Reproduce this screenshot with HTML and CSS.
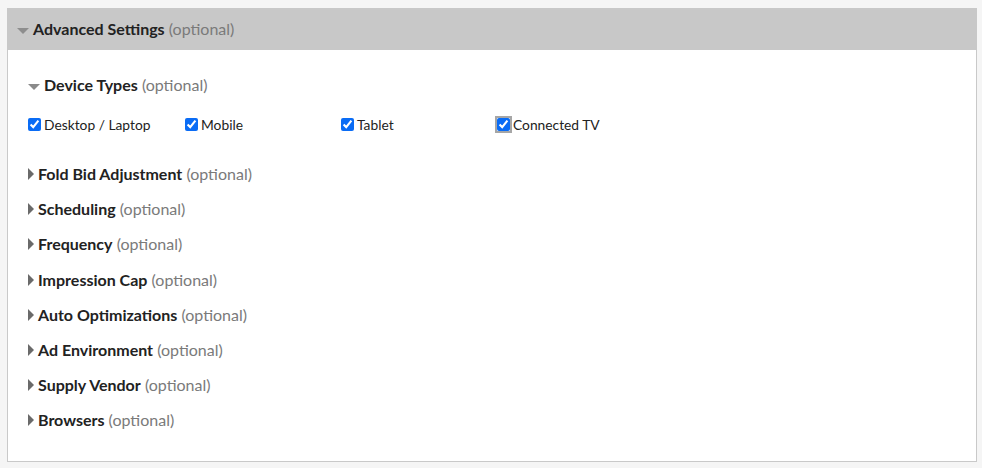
FILE: index.html
```html
<!DOCTYPE html>
<html lang="en-US">
<head>
   <meta charset="UTF-8">
   <meta name="viewport" content="width=device-width, initial-scale=1.0">
   <title>Advanced Settings</title>
   <link rel="stylesheet" href="styles.css">
</head>
<body>
   <div class="panel">
      <div class="panel-header">
         <span class="caret-down light"></span>
         <span class="title"><strong>Advanced Settings</strong> <span class="optional">(optional)</span></span>
      </div>
      <div class="panel-body">
         <div class="section-title">
            <span class="caret-down"></span>
            <span class="title"><strong>Device Types</strong> <span class="optional">(optional)</span></span>
         </div>
         <div class="device-list">
            <label><input type="checkbox" checked>Desktop / Laptop</label>
            <label><input type="checkbox" checked>Mobile</label>
            <label><input type="checkbox" checked>Tablet</label>
            <label><input type="checkbox" class="focused" checked>Connected TV</label>
         </div>

         <div class="collapsed-list">
            <div class="row"><span class="caret-right"></span><span class="title"><strong>Fold Bid Adjustment</strong> <span class="optional">(optional)</span></span></div>
            <div class="row"><span class="caret-right"></span><span class="title"><strong>Scheduling</strong> <span class="optional">(optional)</span></span></div>
            <div class="row"><span class="caret-right"></span><span class="title"><strong>Frequency</strong> <span class="optional">(optional)</span></span></div>
            <div class="row"><span class="caret-right"></span><span class="title"><strong>Impression Cap</strong> <span class="optional">(optional)</span></span></div>
            <div class="row"><span class="caret-right"></span><span class="title"><strong>Auto Optimizations</strong> <span class="optional">(optional)</span></span></div>
            <div class="row"><span class="caret-right"></span><span class="title"><strong>Ad Environment</strong> <span class="optional">(optional)</span></span></div>
            <div class="row"><span class="caret-right"></span><span class="title"><strong>Supply Vendor</strong> <span class="optional">(optional)</span></span></div>
            <div class="row"><span class="caret-right"></span><span class="title"><strong>Browsers</strong> <span class="optional">(optional)</span></span></div>
         </div>
      </div>
   </div>
</body>
</html>
```

FILE: styles.css
```css
:root {
   --page-bg: #f5f5f5;
   --header-bg: #c8c8c8;
   --border: #c9c9c9;
   --text: #222;
   --muted: #7a7a7a;
}
* {
   box-sizing: border-box;
}
body {
   margin: 0;
   padding: 8px 5px 6px 7px;
   background: var(--page-bg);
   font-family: Lato, "Open Sans", sans-serif;
   color: var(--text);
}
strong {
   font-weight: 700;
}
.panel {
   width: 970px;
   background: #fff;
   border: 1px solid var(--border);
   border-top: none;
}
.panel-header {
   display: flex;
   align-items: center;
   height: 42px;
   margin-left: -1px;
   margin-right: -1px;
   padding-left: 10px;
   padding-bottom: 1px;
   background: var(--header-bg);
   font-size: 16px;
}
.panel-body {
   padding: 17px 20px 23px 20px;
}
.section-title {
   display: flex;
   align-items: center;
   height: 35px;
   font-size: 16px;
}
.optional {
   font-weight: 400;
   color: var(--muted);
}
/* Carets */
.caret-down {
   display: inline-block;
   width: 0;
   height: 0;
   margin-right: 4px;
   margin-top: 4px;
   border-left: 6px solid transparent;
   border-right: 6px solid transparent;
   border-top: 6px solid #8a8a8a;
}
.caret-down.light {
   border-top-color: #8e8e8e;
}
.caret-right {
   display: inline-block;
   width: 0;
   height: 0;
   margin-right: 4px;
   margin-top: 1px;
   border-top: 6px solid transparent;
   border-bottom: 6px solid transparent;
   border-left: 6px solid #6a6a6a;
}
.device-list {
   display: grid;
   grid-template-columns: 157px 156px 156px 156px;
   height: 24px;
   margin-top: 10px;
   margin-bottom: 20px;
   font-size: 13.8px;
}
.device-list label {
   display: flex;
   align-items: center;
}
.device-list input {
   width: 13px;
   height: 13px;
   margin: 0 3px 0 0;
   accent-color: #0a6cf5;
}
.device-list input.focused {
   outline: 2px solid #a6a6a6;
   outline-offset: 0;
   border-radius: 3px;
}
.row {
   display: flex;
   align-items: center;
   height: 35.2px;
   font-size: 16px;
}
```
